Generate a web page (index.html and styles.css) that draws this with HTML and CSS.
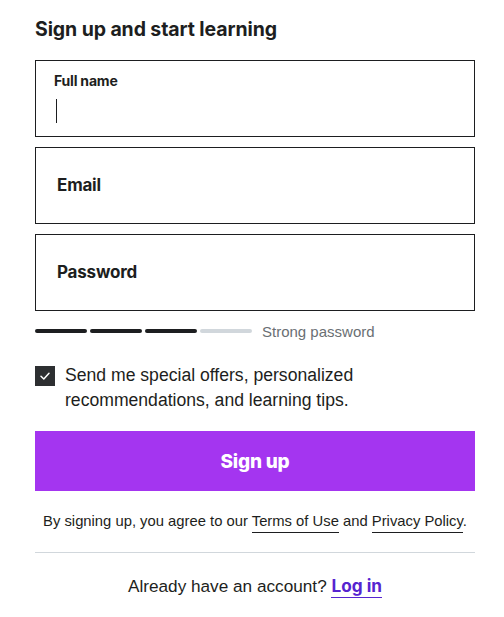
FILE: index.html
```html
<!DOCTYPE html>
<html>
<head>
<meta charset="utf-8">
<link rel="stylesheet" href="styles.css">
</head>
<body>
<div class="wrap">
  <h1 class="title">Sign up and start learning</h1>
  <form class="form">
    <div class="field field-active">
      <label class="lbl-small">Full name</label>
      <span class="caret"></span>
    </div>
    <div class="field"><label class="lbl">Email</label></div>
    <div class="field"><label class="lbl">Password</label></div>
    <div class="strength">
      <div class="bars">
        <span class="bar on"></span>
        <span class="bar on"></span>
        <span class="bar on"></span>
        <span class="bar"></span>
      </div>
      <span class="strength-text">Strong password</span>
    </div>
    <div class="check">
      <span class="box">
        <svg width="14" height="14" viewBox="0 0 14 14"><path d="M3 7.3 L5.8 10 L11 4.2" fill="none" stroke="#fff" stroke-width="1.5" stroke-linecap="round" stroke-linejoin="round"/></svg>
      </span>
      <span class="check-text">Send me special offers, personalized recommendations, and learning tips.</span>
    </div>
    <button type="button" class="btn">Sign up</button>
    <p class="terms">By signing up, you agree to our <a class="tlink">Terms of Use</a> and <a class="tlink">Privacy Policy</a>.</p>
    <hr class="divider">
    <p class="login">Already have an account? <a class="login-link">Log in</a></p>
  </form>
</div>
</body>
</html>
```
FILE: styles.css
```css
* { box-sizing: border-box; }
body {
  margin: 0;
  background: #fff;
  color: #2d2f31;
  font-family: "Liberation Sans", Arial, sans-serif;
}
.wrap {
  width: 440px;
  margin-left: 35px;
  padding-top: 17px;
}
.title {
  margin: 0;
  font-family: Inter, sans-serif;
  font-weight: 700;
  font-size: 19.5px;
  line-height: 24px;
  color: #1d1e20;
  letter-spacing: -0.1px;
}
.form {
  margin-top: 19px;
  display: flex;
  flex-direction: column;
}
.field {
  height: 77px;
  border: 1px solid #1d1e20;
  margin-bottom: 10px;
  padding-left: 21px;
  display: flex;
  align-items: center;
}
.field-active {
  flex-direction: column;
  align-items: flex-start;
  justify-content: flex-start;
  padding-left: 18px;
  padding-top: 11px;
}
.lbl-small {
  font-family: Inter, sans-serif;
  font-weight: 700;
  font-size: 14px;
  line-height: 18px;
  color: #1d1e20;
  letter-spacing: -0.2px;
}
.caret {
  display: block;
  width: 1px;
  height: 24px;
  background: #1d1e20;
  margin-top: 9px;
  margin-left: 2px;
}
.lbl {
  font-family: Inter, sans-serif;
  font-weight: 700;
  font-size: 17px;
  color: #1d1e20;
  letter-spacing: -0.2px;
  margin-top: -2px;
}
.strength {
  display: flex;
  align-items: center;
  margin-top: 2px;
  height: 16px;
}
.bars { display: flex; gap: 3px; }
.bar {
  width: 52px;
  height: 4px;
  border-radius: 2px;
  background: #d1d7dc;
}
.bar.on { background: #1d1e20; }
.strength-text {
  margin-left: 10px;
  font-size: 15px;
  color: #6a6f73;
}
.check {
  display: flex;
  align-items: flex-start;
  margin-top: 24px;
}
.box {
  width: 20px;
  height: 20px;
  background: #2d2f31;
  display: flex;
  align-items: center;
  justify-content: center;
  margin-top: 3px;
  flex-shrink: 0;
}
.check-text {
  margin-left: 10px;
  font-size: 17.6px;
  line-height: 25px;
  color: #1d1e20;
  width: 310px;
}
.btn {
  margin-top: 18px;
  height: 60px;
  border: 0;
  background: #a435f0;
  color: #fff;
  font-family: Inter, sans-serif;
  font-weight: 800;
  font-size: 19px;
  letter-spacing: -0.2px;
}
.terms {
  margin: 20px 0 0;
  text-align: center;
  font-size: 14.8px;
  line-height: 20px;
  color: #1d1e20;
}
.tlink {
  border-bottom: 1px solid #1d1e20;
  padding-bottom: 3px;
}
.divider {
  margin: 21px 0 0;
  border: 0;
  border-top: 1px solid #d1d7dc;
}
.login {
  margin: 21px 0 0;
  text-align: center;
  font-size: 17.2px;
  line-height: 24px;
  color: #1d1e20;
}
.login-link {
  color: #5624d0;
  font-family: Inter, sans-serif;
  font-weight: 700;
  border-bottom: 1px solid #5624d0;
  padding-bottom: 1px;
}
```
